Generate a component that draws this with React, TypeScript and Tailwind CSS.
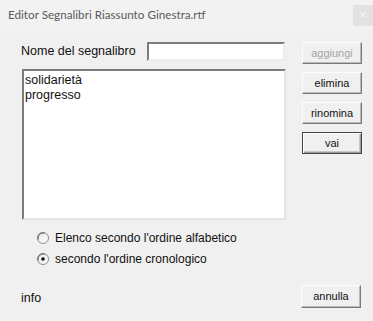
import React, { useState } from 'react'

const btn =
  'w-[60px] h-[22px] flex items-center justify-center text-[11px] bg-[#f0f0f0] border border-t-[#fcfcfc] border-l-[#fcfcfc] border-b-[#7a7a7a] border-r-[#7a7a7a] shadow-[inset_-1px_-1px_0_#b9b9b9]'

const Radio: React.FC<{ checked: boolean; label: string; onClick: () => void }> = ({ checked, label, onClick }) => (
  <div className="flex items-center h-[21px] cursor-default" onClick={onClick}>
    <svg width="12" height="12" viewBox="0 0 12 12" className="ml-[37px] mr-[6px]">
      <defs>
        <linearGradient id="rg" x1="0" y1="0" x2="1" y2="1">
          <stop offset="0" stopColor="#e6e6e6" />
          <stop offset="1" stopColor="#ffffff" />
        </linearGradient>
      </defs>
      <circle cx="6" cy="6" r="5.5" fill="url(#rg)" stroke="#8c8c8c" strokeWidth="1" />
      <path d="M1.2 7.5 A5 5 0 0 1 7.5 1.2" fill="none" stroke="#5c5c5c" strokeWidth="1" />
      {checked && <circle cx="6" cy="6" r="1.8" fill="#111" />}
    </svg>
    <span className="text-[12px] text-[#111]">{label}</span>
  </div>
)

export default function App() {
  const [ordine, setOrdine] = useState<'alfa' | 'crono'>('crono')

  return (
    <div
      className="w-[373px] h-[321px] bg-[#f0f0f0] flex flex-col overflow-hidden"
      style={{ fontFamily: '"Liberation Sans", Arial, sans-serif' }}
    >
      <div className="h-[31px] flex items-start justify-between bg-[#f2f2f2]">
        <div
          className="pl-[8px] pt-[6px] text-[11.7px] text-[#5a5a5a]"
          style={{ fontFamily: 'Lato, "Noto Sans", sans-serif' }}
        >
          Editor Segnalibri Riassunto Ginestra.rtf
        </div>
        <div className="mt-[5px] w-[20px] h-[21px] bg-[#e2e2e2] flex items-center justify-center text-[#f8f8f8] text-[9px]">
          ✕
        </div>
      </div>

      <div className="flex pl-[21px] pt-[11px]">
        <div className="w-[265px] flex flex-col">
          <div className="flex items-center h-[19px]">
            <span className="w-[126px] text-[12.5px] text-[#111]">Nome del segnalibro</span>
            <input
              className="w-[138px] h-[19px] bg-white outline-none border-2 border-t-[#7c7c7c] border-l-[#7c7c7c] border-b-[#ececec] border-r-[#ececec] text-[12px] px-1"
            />
          </div>
          <div className="mt-[8px] ml-[1px] w-[264px] h-[151px] bg-white border-2 border-t-[#7c7c7c] border-l-[#7c7c7c] border-b-[#e6e6e6] border-r-[#e6e6e6] pl-[1px] pt-[2px] text-[12.5px] leading-[15px] text-[#111]">
            <div>solidarietà</div>
            <div>progresso</div>
          </div>
        </div>
        <div className="ml-[16px] flex flex-col gap-[8px]">
          <button className={`${btn} text-[#a3a3a3]`}>aggiungi</button>
          <button className={`${btn} text-[#111]`}>elimina</button>
          <button className={`${btn} text-[#111]`}>rinomina</button>
          <button className="w-[60px] h-[22px] flex items-center justify-center text-[11px] text-[#111] bg-[#f0f0f0] border border-[#444] shadow-[inset_1px_1px_0_#fff,inset_-1px_-1px_0_#9a9a9a,inset_-2px_-2px_0_#c8c8c8]">
            vai
          </button>
        </div>
      </div>

      <div className="mt-[7px] flex flex-col">
        <Radio
          checked={ordine === 'alfa'}
          label="Elenco secondo l'ordine alfabetico"
          onClick={() => setOrdine('alfa')}
        />
        <Radio
          checked={ordine === 'crono'}
          label="secondo l'ordine cronologico"
          onClick={() => setOrdine('crono')}
        />
      </div>

      <div className="mt-[16px] flex items-center justify-between pl-[21px] pr-[12px]">
        <span className="pt-[3px] text-[12.5px] text-[#111]">info</span>
        <button className="w-[60px] h-[23px] flex items-center justify-center text-[11px] text-[#111] bg-[#f0f0f0] border border-t-[#fcfcfc] border-l-[#fcfcfc] border-b-[#7a7a7a] border-r-[#7a7a7a] shadow-[inset_-1px_-1px_0_#b9b9b9]">
          annulla
        </button>
      </div>
    </div>
  )
}
